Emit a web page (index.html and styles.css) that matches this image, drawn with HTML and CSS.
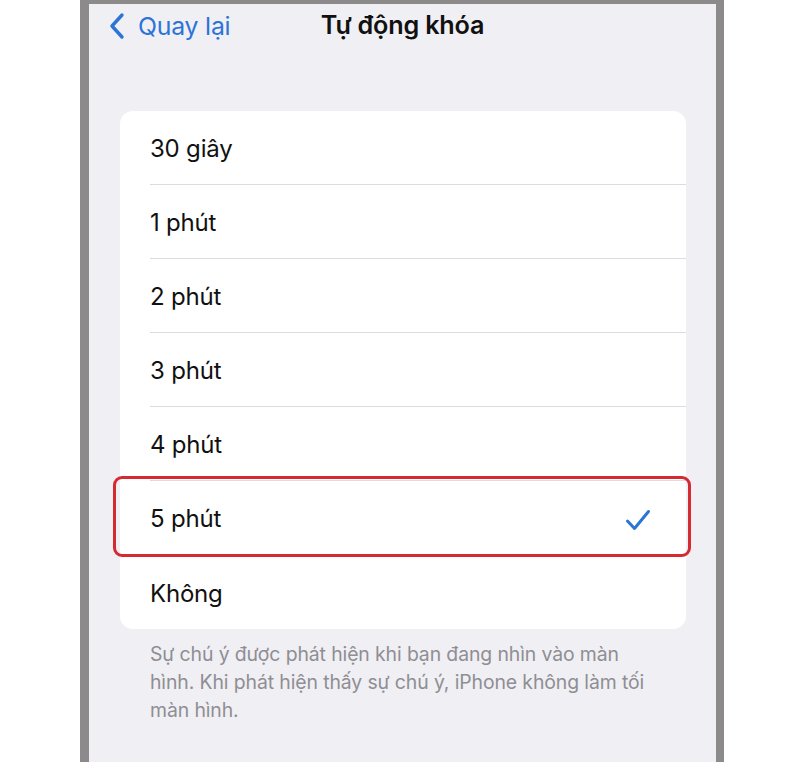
FILE: index.html
```html
<!DOCTYPE html>
<html lang="vi">
<head>
<meta charset="utf-8">
<title>Tự động khóa</title>
<link rel="stylesheet" href="styles.css">
</head>
<body>
<div class="phone">
  <header class="nav">
    <a class="back" href="#">
      <svg class="chev" viewBox="0 0 16 28" width="16" height="28"><path d="M13 3 L3 14 L13 25" fill="none" stroke="currentColor" stroke-width="3.4" stroke-linecap="round" stroke-linejoin="round"/></svg>
      <span>Quay lại</span>
    </a>
    <h1 class="title">Tự động khóa</h1>
  </header>

  <ul class="list">
    <li class="row">30 giây</li>
    <li class="row">1 phút</li>
    <li class="row">2 phút</li>
    <li class="row">3 phút</li>
    <li class="row">4 phút</li>
    <li class="row selected">5 phút
      <svg class="check" viewBox="0 0 26 22" width="26" height="22"><path d="M2.5 12 L9.5 19.5 L23.5 2.5" fill="none" stroke="currentColor" stroke-width="3" stroke-linecap="round" stroke-linejoin="round"/></svg>
      <span class="mark"></span>
    </li>
    <li class="row">Không</li>
  </ul>

  <p class="note">Sự chú ý được phát hiện khi bạn đang nhìn vào màn hình. Khi phát hiện thấy sự chú ý, iPhone không làm tối màn hình.</p>
</div>
</body>
</html>
```

FILE: styles.css
```css
html, body {
  margin: 0;
  padding: 0;
  background: #ffffff;
  height: 762px;
  overflow: hidden;
}

.phone {
  box-sizing: border-box;
  margin-left: 80px;
  width: 644px;
  height: 762px;
  background: #f0eff4;
  border-top: 4px solid #8c8a8a;
  border-left: 9px solid #8c8a8a;
  border-right: 8px solid #8c8a8a;
  font-family: Inter, "Noto Sans", sans-serif;
}

.nav {
  position: relative;
  height: 107px;
  display: flex;
  align-items: flex-start;
}

.back {
  display: flex;
  align-items: center;
  gap: 13px;
  margin: 7px 0 0 20px;
  color: #2c74d6;
  text-decoration: none;
  font-size: 24.8px;
  letter-spacing: -0.2px;
}

.back span { line-height: 30px; }

.chev { display: block; }

.title {
  position: absolute;
  left: 0;
  right: 0;
  top: 6px;
  margin: 0;
  text-align: center;
  font-size: 25.2px;
  font-weight: 600;
  color: #111111;
  line-height: 30px;
  letter-spacing: -0.2px;
}

.list {
  list-style: none;
  margin: 0 30px 0 31px;
  padding: 0;
  background: #ffffff;
  border-radius: 13px;
}

.row {
  position: relative;
  height: 74px;
  display: flex;
  align-items: center;
  margin-left: 30px;
  padding-top: 2px;
  font-size: 24px;
  color: #111111;
  border-bottom: 1px solid #dcdce0;
  box-sizing: border-box;
  letter-spacing: -0.2px;
}

.row:last-child { border-bottom: none; }

.check {
  position: absolute;
  right: 35px;
  top: 28px;
  color: #2c74d6;
}

.mark {
  position: absolute;
  left: -37px;
  right: -5px;
  top: -5px;
  bottom: -3px;
  border: 3px solid #d62a33;
  border-radius: 9px;
}

.note {
  margin: 11px 48px 0 61px;
  font-size: 19.4px;
  line-height: 28px;
  color: #8e8e93;
  letter-spacing: -0.1px;
}
```
